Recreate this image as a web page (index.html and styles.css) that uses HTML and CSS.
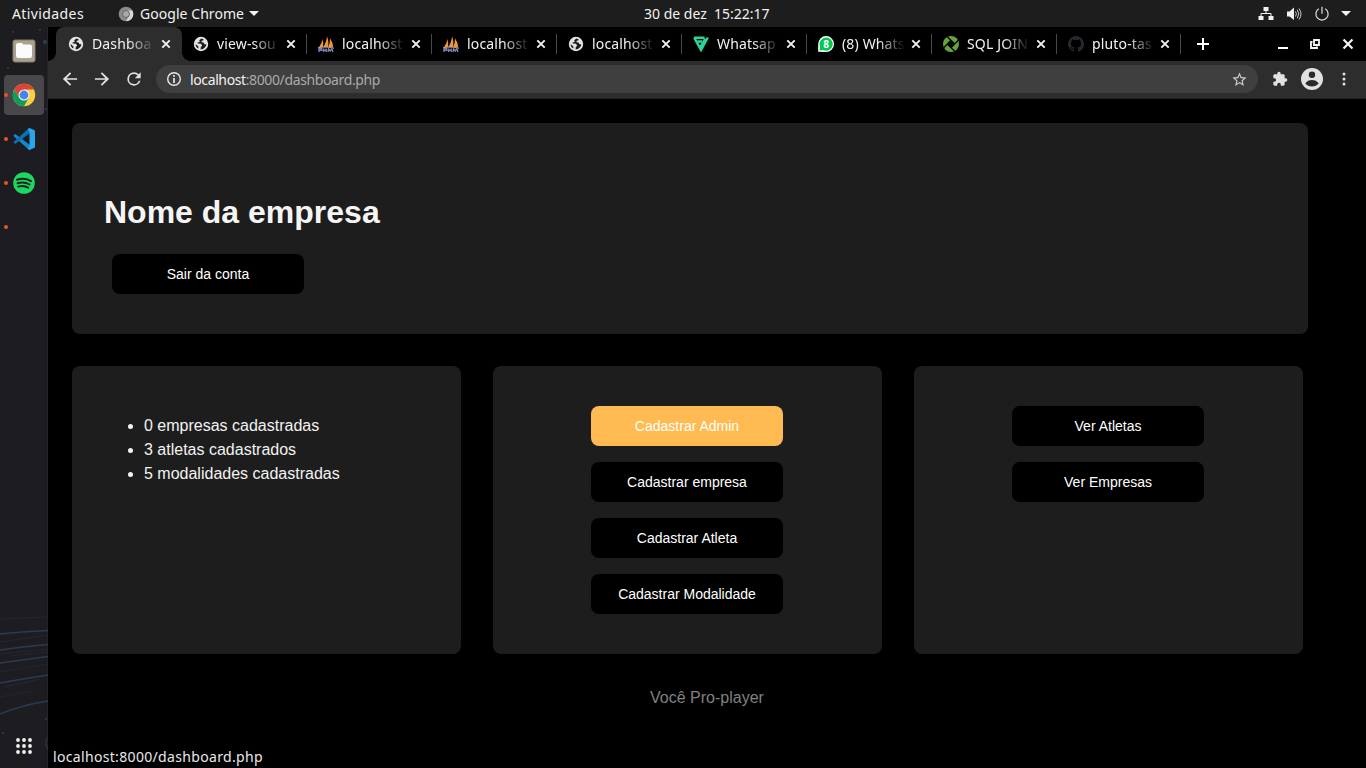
FILE: index.html
```html
<!DOCTYPE html>
<html lang="pt-BR">
<head>
<meta charset="utf-8">
<title>Dashboard</title>
<link rel="stylesheet" href="styles.css">
</head>
<body>
<svg class="defs" width="0" height="0">
  <symbol id="globe" viewBox="0 0 16 16"><circle cx="8" cy="8" r="7.2" fill="#e4e4e4"/><path d="M8.4 2.6 6.2 4.2 6.8 6 4.4 6.4 4.8 7.6 8 7.8 9.2 9.8 7.8 11 7.6 13.4C10.6 13.4 13.2 11 13.3 8.3L11.4 8.2 10.6 6.4 8.4 6.2 8.8 4.8 10.6 4.2 10.4 3.2zM2.6 8 5.4 10.4 5.3 12.6C3.6 11.6 2.6 10 2.6 8z" fill="#1b1b1b"/></symbol>
  <symbol id="close" viewBox="0 0 10 10"><path d="M1.3 1.3 8.7 8.7M8.7 1.3 1.3 8.7" stroke="#f1f1f1" stroke-width="1.9"/></symbol>
  <symbol id="sails" viewBox="0 0 16 16"><path d="M.8 11.600Q4 7.600 4.400 3Q5.600 6.500 5 11.200zM5 11.200Q8.600 6.400 9 .2Q11.200 6 9.900 11zM10.200 11Q12.200 7 12 2.200Q15 6.400 15.200 11.600z" fill="#f5952f"/><path d="M0 11.800 5 11l5 .2 6 1" fill="none" stroke="#a9a4b4" stroke-width="1"/><path d="M1 16V12.800h2.800v1.600H1M5.600 12.600V16m0-1.700h2.600m0-1.700V16M10 16l.6-3.200 1.600 2.200 1.600-2.200L15 16" fill="none" stroke="#7d80b4" stroke-width="1.400"/></symbol>
</svg>

<div class="desktop">
  <header class="topbar">
    <span class="activities">Atividades</span>
    <svg class="app-icon" viewBox="0 0 16 16"><circle cx="8" cy="8" r="7.300" fill="#8b8b8b"/><path d="M8 4.500h6.400A7.300 7.300 0 0 1 8 15.300L11 10z" fill="#d6d6d6"/><circle cx="8" cy="8" r="3.500" fill="#aaa" stroke="#555" stroke-width=".8"/></svg>
    <span class="app-name">Google Chrome</span>
    <svg class="caret" viewBox="0 0 10 5"><path d="M0 0h10L5 5z" fill="#f2f2f2"/></svg>
    <span class="clock">30 de dez&nbsp; 15:22:17</span>
    <div class="tray">
      <svg width="16" height="16" viewBox="0 0 16 16"><path d="M5.500 1h5v4h-5zM.500 10h5v4h-5zM10.500 10h5v4h-5z" fill="#f2f2f2"/><path d="M8 5v2.500M3 10V7.500h10V10" fill="none" stroke="#f2f2f2"/></svg>
      <svg width="16" height="16" viewBox="0 0 16 16"><path d="M1 5.500h2.500L8 1.500v12.500L3.500 10.500H1z" fill="#f2f2f2"/><path d="M9.500 5.500q1.800 2.300 0 5M11.300 3.800q3 4 0 8.400M13 2.500q4 5.500 0 11" fill="none" stroke="#c9c9c9"/></svg>
      <svg width="16" height="16" viewBox="0 0 16 16"><path d="M8 .800v7M4.800 2.800a6.100 6.100 0 1 0 6.400 0" fill="none" stroke="#e2e2e2" stroke-width="1.200"/></svg>
      <svg width="10" height="5" viewBox="0 0 10 5"><path d="M0 0h10L5 5z" fill="#f2f2f2"/></svg>
    </div>
  </header>

  <aside class="dock">
    <svg class="wallpaper" viewBox="0 0 48 741" width="48" height="741">
      <g fill="none" stroke="#2b3b50">
        <path d="M0 607Q20 605 48 603.500M0 623Q22 620 48 617.500M0 636Q22 633 48 629.500M0 656Q22 652 48 648M0 687Q22 678 48 674" stroke-width="1.500"/>
        <path d="M0 592 48 590M0 627 48 622M10 629 48 625M0 645 48 637M0 670 32 664M4 660 40 652M0 615 48 608" stroke-width=".6" opacity=".6"/>
        <path d="M48 710q-5 5 0 12"/>
      </g>
      <g fill="#343b48"><circle cx="45" cy="15" r="2"/><circle cx="40" cy="3" r="1"/><circle cx="8" cy="41" r="1"/><circle cx="13" cy="5" r="1"/><circle cx="46" cy="82" r="1"/><circle cx="46" cy="692" r="1"/><circle cx="3" cy="706" r="1"/></g>
    </svg>
    <div class="dock-item"><svg width="24" height="24" viewBox="0 0 24 24"><rect x="1" y="1" width="22" height="22" rx="2" fill="#aaa28e" stroke="#857d69"/><path d="M4 6q0-2 2-2h4l1.500 1.500H18q2 0 2 2V17q0 2-2 2H6q-2 0-2-2z" fill="#fafafa"/></svg></div>
    <div class="dock-item active"><i class="dot"></i><svg width="24" height="24" viewBox="0 0 24 24"><circle cx="12" cy="12" r="11.200" fill="#ffcd40"/><path d="M2.300 6.400A11.200 11.200 0 0 1 21.700 6.400H12L7.200 14.800z" fill="#dd4437"/><path d="M2.300 6.400A11.200 11.200 0 0 0 12 23.200L16.800 14.800H7.200z" fill="#0f9d58"/><circle cx="12" cy="12" r="5.500" fill="#f3f3f3"/><circle cx="12" cy="12" r="4.400" fill="#4285f4"/></svg></div>
    <div class="dock-item"><i class="dot"></i><svg width="24" height="24" viewBox="0 0 24 24"><path d="M1.200 8.800 3.200 7 18 18V22.800L16.500 22.500z" fill="#1587cc"/><path d="M1.200 15.200 3.200 17 18 6V1.200L16.500 1.500z" fill="#0871b3"/><path d="M17.500 1 23 3.500V20.500L17.500 23 16 22 17.500 18V6L16 2z" fill="#2ba4ea"/></svg></div>
    <div class="dock-item"><i class="dot"></i><svg width="24" height="24" viewBox="0 0 24 24"><circle cx="12" cy="12" r="10.800" fill="#1ed760"/><path d="M5 8.700q7.500-2.200 14 1.400M5.600 12.200q6.600-1.900 12 1.300M6.200 15.600q5.600-1.600 10 1.100" fill="none" stroke="#16251b" stroke-width="2" stroke-linecap="round"/></svg></div>
    <div class="dock-item"><i class="dot"></i></div>
    <div class="apps"><svg width="16" height="16" viewBox="0 0 16 16" fill="#f2f2f2"><circle cx="2" cy="2" r="1.900"/><circle cx="8" cy="2" r="1.900"/><circle cx="14" cy="2" r="1.900"/><circle cx="2" cy="8" r="1.900"/><circle cx="8" cy="8" r="1.900"/><circle cx="14" cy="8" r="1.900"/><circle cx="2" cy="14" r="1.900"/><circle cx="8" cy="14" r="1.900"/><circle cx="14" cy="14" r="1.900"/></svg></div>
  </aside>

  <section class="browser">
    <div class="tabs">
      <div class="tab current"><svg class="fav"><use href="#globe"/></svg><span class="label">Dashboa</span><svg class="x"><use href="#close"/></svg></div>
      <div class="tab"><svg class="fav"><use href="#globe"/></svg><span class="label">view-sou</span><svg class="x"><use href="#close"/></svg></div>
      <div class="tab line"><svg class="fav"><use href="#sails"/></svg><span class="label">localhost</span><svg class="x"><use href="#close"/></svg></div>
      <div class="tab line"><svg class="fav"><use href="#sails"/></svg><span class="label">localhost</span><svg class="x"><use href="#close"/></svg></div>
      <div class="tab line"><svg class="fav"><use href="#globe"/></svg><span class="label">localhost</span><svg class="x"><use href="#close"/></svg></div>
      <div class="tab line"><svg class="fav" viewBox="0 0 16 16"><path d="M1 1.700H11.500M1.200 1.700 8 14 14.800 1.500M4.500 5.500H9M8 13 7 9M8.200 10 12.200 2.500" fill="none" stroke="#2bd49a" stroke-width="2.400"/></svg><span class="label">Whatsap</span><svg class="x"><use href="#close"/></svg></div>
      <div class="tab line"><svg class="fav" viewBox="0 0 16 16"><path d="M.2 15.800V8A7.900 7.900 0 1 1 8 15.900z" fill="#fff"/><path d="M1.600 14.400 2 10.500A6.600 6.600 0 1 1 5.200 14z" fill="#00c853"/><text class="badge-text" x="8" y="11.800" text-anchor="middle">8</text></svg><span class="label">(8) Whats</span><svg class="x"><use href="#close"/></svg></div>
      <div class="tab line"><svg class="fav" viewBox="0 0 16 16"><circle cx="8" cy="8" r="8" fill="#69a33b"/><path d="M8 4.200 11.800 8 8 11.800 4.200 8z" fill="#060a03"/><path d="M4 .5 11.800 8M15.500 4 8 11.800M12 15.500 4.200 8M.5 12 8 4.200" stroke="#060a03" stroke-width="1.300"/></svg><span class="label">SQL JOIN</span><svg class="x"><use href="#close"/></svg></div>
      <div class="tab line last"><svg class="fav" viewBox="0 0 16 16"><path fill="#24292e" d="M8 0C3.580 0 0 3.580 0 8c0 3.540 2.290 6.530 5.470 7.590.4.070.55-.17.55-.38 0-.19-.01-.82-.01-1.490-2.010.37-2.530-.49-2.690-.94-.09-.23-.48-.94-.82-1.130-.28-.15-.68-.52-.01-.53.63-.01 1.080.58 1.230.82.72 1.210 1.870.87 2.330.66.070-.52.28-.87.51-1.070-1.780-.2-3.640-.89-3.640-3.950 0-.87.31-1.590.82-2.150-.08-.2-.36-1.020.08-2.120 0 0 .67-.21 2.200.82a7.600 7.600 0 0 1 4 0c1.530-1.040 2.200-.82 2.200-.82.44 1.100.16 1.920.08 2.120.51.56.82 1.270.82 2.150 0 3.070-1.870 3.750-3.650 3.950.29.25.54.73.54 1.480 0 1.070-.01 1.930-.01 2.200 0 .21.15.46.55.38A8.010 8.010 0 0 0 16 8c0-4.420-3.580-8-8-8z"/></svg><span class="label">pluto-tas</span><svg class="x"><use href="#close"/></svg></div>
      <svg class="plus" viewBox="0 0 12 12"><path d="M6 0v12M0 6h12" stroke="#fff" stroke-width="2"/></svg>
      <div class="window-buttons">
        <svg width="10" height="10" viewBox="0 0 10 10"><path d="M0 9h10" stroke="#fff" stroke-width="2"/></svg>
        <svg width="10" height="10" viewBox="0 0 10 10"><path d="M4 1h5v5H4zM2.500 3H1v6h6V7.500" fill="none" stroke="#f4f4f4" stroke-width="1.800"/></svg>
        <svg width="12" height="12"><use href="#close"/></svg>
      </div>
    </div>

    <div class="toolbar">
      <svg class="nav" viewBox="0 0 24 24"><path d="M20.500 11H7.830l5.590-5.590L12 4l-8.500 8 8.500 8 1.410-1.410L7.830 13H20.500z"/></svg>
      <svg class="nav" viewBox="0 0 24 24"><path d="M3.500 11h12.670l-5.590-5.590L12 4l8.500 8-8.500 8-1.410-1.410L16.170 13H3.500z"/></svg>
      <svg class="nav" viewBox="0 0 24 24"><path d="M17.650 6.350A7.960 7.960 0 0 0 12 4a8 8 0 1 0 7.730 10h-2.080A6 6 0 1 1 12 6c1.660 0 3.140.69 4.220 1.780L13 11h7V4z"/></svg>
      <div class="address">
        <svg width="16" height="16" viewBox="0 0 16 16"><circle cx="8" cy="8" r="6.300" fill="none" stroke="#e8e8e8" stroke-width="1.400"/><path d="M8 4v1.700M8 7v5" stroke="#e8e8e8" stroke-width="1.700"/></svg>
        <span class="url"><b>localhost</b>:8000/dashboard.php</span>
        <svg class="star" viewBox="0 0 24 24"><path d="m22 9.240-7.190-.62L12 2 9.190 8.630 2 9.240l5.460 4.730L5.820 21 12 17.270 18.180 21l-1.630-7.030zM12 15.400l-3.760 2.270 1-4.280-3.320-2.880 4.380-.38L12 6.100l1.710 4.040 4.380.38-3.320 2.880 1 4.280z" fill="#ccc"/></svg>
      </div>
      <svg class="puzzle" viewBox="0 0 24 24"><path d="M20.500 11H19V7c0-1.100-.9-2-2-2h-4V3.500a2.500 2.500 0 0 0-5 0V5H4c-1.100 0-2 .9-2 2v3.800h1.500a2.700 2.700 0 0 1 0 5.400H2V20c0 1.100.9 2 2 2h3.800v-1.500a2.700 2.700 0 0 1 5.400 0V22H17c1.100 0 2-.9 2-2v-4h1.500a2.500 2.500 0 0 0 0-5z"/></svg>
      <svg class="avatar" viewBox="0 0 22 22"><circle cx="11" cy="11" r="11" fill="#e1e1e1"/><circle cx="11" cy="6.700" r="3.200" fill="#292929"/><path d="M4.300 15.300q2.500-3.400 6.700-3.400t6.700 3.400q-2.500 3.300-6.700 3.300t-6.700-3.300z" fill="#292929"/></svg>
      <svg class="menu" viewBox="0 0 4 14"><circle cx="2" cy="2" r="1.500"/><circle cx="2" cy="7" r="1.500"/><circle cx="2" cy="12" r="1.500"/></svg>
    </div>

    <main class="page">
      <section class="card hero">
        <h1>Nome da empresa</h1>
        <a class="button">Sair da conta</a>
      </section>
      <div class="row">
        <section class="card panel">
          <ul class="stats"><li>0 empresas cadastradas</li><li>3 atletas cadastrados</li><li>5 modalidades cadastradas</li></ul>
        </section>
        <section class="card panel actions">
          <a class="button highlight">Cadastrar Admin</a><a class="button">Cadastrar empresa</a><a class="button">Cadastrar Atleta</a><a class="button">Cadastrar Modalidade</a>
        </section>
        <section class="card panel actions">
          <a class="button">Ver Atletas</a><a class="button">Ver Empresas</a>
        </section>
      </div>
      <footer class="footer">Você Pro-player</footer>
      <div class="status">localhost:8000/dashboard.php</div>
    </main>
  </section>
</div>
</body>
</html>
```
FILE: styles.css
```css
* { box-sizing: border-box; }
body { margin: 0; background: #000; overflow: hidden; font-family: "Noto Sans", sans-serif; color: #f2f2f2; }
svg { display: block; flex: none; }
.defs { position: absolute; }
.desktop { width: 1366px; height: 768px; display: grid; grid-template: 27px 741px / 48px 1318px; }

.topbar { grid-column: 1 / 3; display: flex; align-items: center; background: #1d1d1d; font-size: 14px; line-height: 27px; padding: 0 15px 0 12px; white-space: nowrap; }
.activities { width: 106px; letter-spacing: .4px; }
.app-icon { width: 16px; height: 16px; margin-right: 6px; }
.app-name { width: 109px; letter-spacing: .05px; }
.caret { width: 10px; height: 5px; }
.clock { margin-left: 385px; }
.tray { margin-left: auto; display: flex; align-items: center; gap: 12px; }
.tray svg:nth-child(-n+3) { position: relative; left: 1px; }

.dock { position: relative; background: #1d1d21; border-right: 1px solid #242427; padding: 4px 4px 0; display: flex; flex-direction: column; gap: 4px; }
.wallpaper { position: absolute; left: 0; top: 0; }
.dock-item { position: relative; width: 40px; height: 40px; border-radius: 4px; display: flex; align-items: center; justify-content: center; }
.active { background: #48484b; }
.dot { position: absolute; left: 0; top: 18px; width: 4px; height: 4px; border-radius: 50%; background: #e95420; }
.apps { margin: auto 0 14px 12px; position: relative; }

.browser { display: flex; flex-direction: column; }
.tabs { height: 34px; padding-left: 8px; display: flex; align-items: center; }
.tab { position: relative; width: 125px; height: 34px; flex: none; padding-left: 12px; display: flex; align-items: center; }
.current { width: 126px; margin-right: -1px; background: #2d2d2d; border-radius: 8px 8px 0 0; }
.current::before, .current::after { content: ""; position: absolute; bottom: 0; width: 8px; height: 8px; }
.current::before { left: -8px; background: radial-gradient(circle at 0 0, transparent 7.500px, #2d2d2d 8px); }
.current::after { right: -8px; background: radial-gradient(circle at 100% 0, transparent 7.500px, #2d2d2d 8px); }
.line::before, .last::after { content: ""; position: absolute; left: 0; top: 7px; width: 1px; height: 20px; background: #484848; }
.last::after { left: 124px; }
.fav { width: 16px; height: 16px; }
.label { width: 65px; margin: 0 4px 0 8px; white-space: nowrap; font-size: 14px; line-height: 20px; letter-spacing: .15px; mask-image: linear-gradient(90deg, #000 36px, transparent 63px); }
.x { width: 10px; height: 10px; }
.last .x { margin-left: -1px; }
.badge-text { font: bold 10px "Noto Sans", sans-serif; fill: #fff; }
.plus { width: 12px; height: 12px; margin-left: 16px; }
.window-buttons { margin-left: auto; margin-right: 12px; display: flex; align-items: center; gap: 22px; }

.toolbar { height: 38px; background: #2d2d2d; border-bottom: 1px solid #242424; display: flex; align-items: center; padding-left: 12px; padding-bottom: 1px; fill: #e2e2e2; }
.nav { width: 20px; height: 20px; margin-right: 12px; }
.address { width: 1102px; height: 28px; border-radius: 14px; background: #3f3f3f; display: flex; align-items: center; padding: 0 10px; }
.url { margin-left: 8px; color: #aaa; font-size: 14px; letter-spacing: -.38px; }
.url b { font-weight: 400; color: #f2f2f2; }
.star { width: 17px; height: 17px; margin-left: auto; }
.puzzle { width: 16px; height: 16px; margin-left: 14px; }
.avatar { width: 22px; height: 22px; margin-left: 13px; }
.menu { width: 4px; height: 14px; margin-left: 19px; }

.page { position: relative; flex: 1; padding: 24px; font: 16px/24px "Liberation Sans", sans-serif; }
.card { background: #1d1d1d; border-radius: 8px; }
.hero { width: 1236px; height: 211px; padding: 65px 32px 0; }
.hero h1 { margin: 0 0 18px; font-size: 32px; line-height: 48px; color: #f5f5f5; }
.button { display: block; width: 192px; height: 40px; line-height: 40px; border-radius: 8px; background: #000; color: #fff; font-size: 14px; text-align: center; }
.hero .button { margin-left: 8px; }
.row { display: flex; gap: 32px; margin-top: 32px; }
.panel { width: 389px; height: 288px; }
.stats { margin: 48px 0 0 32px; padding-left: 40px; color: #f2f2f2; }
.actions { display: flex; flex-direction: column; align-items: center; gap: 16px; padding: 40px 1px 0 0; }
.highlight { background: #ffbb52; }
.footer { margin-top: 32px; text-align: center; color: #808080; }
.status { position: absolute; left: 0; bottom: 0; height: 22px; padding-left: 5px; background: #000; color: #e8e8e8; font: 14px/22px "Noto Sans", sans-serif; letter-spacing: .33px; }
```
